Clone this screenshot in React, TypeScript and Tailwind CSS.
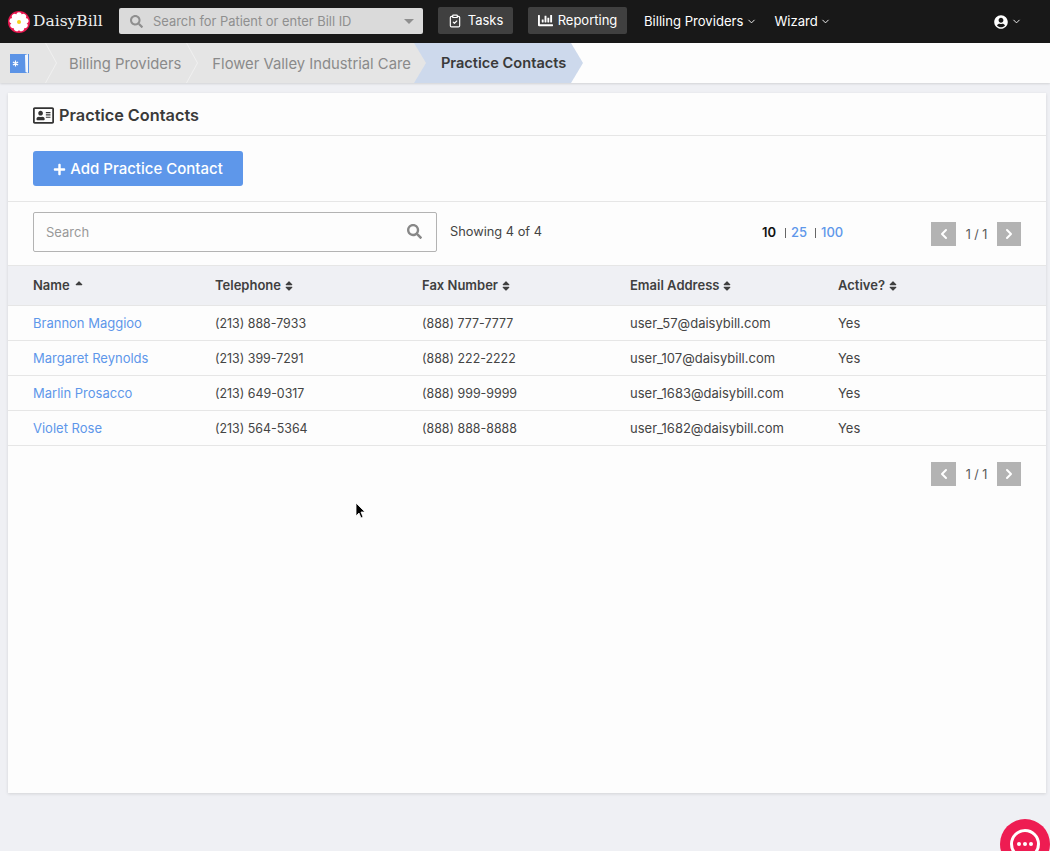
import React from 'react';
import { ChevronDown, ChevronLeft, ChevronRight, ClipboardCheck } from 'lucide-react';
import { FaChartBar, FaPlus, FaRegAddressCard, FaSearch, FaSort, FaSortUp, FaUserCircle } from 'react-icons/fa';

const contacts = [
  { name: 'Brannon Maggioo', phone: '(213) 888-7933', fax: '(888) 777-7777', email: 'user_57@daisybill.com' },
  { name: 'Margaret Reynolds', phone: '(213) 399-7291', fax: '(888) 222-2222', email: 'user_107@daisybill.com' },
  { name: 'Marlin Prosacco', phone: '(213) 649-0317', fax: '(888) 999-9999', email: 'user_1683@daisybill.com' },
  { name: 'Violet Rose', phone: '(213) 564-5364', fax: '(888) 888-8888', email: 'user_1682@daisybill.com' },
];

const columns = ['Telephone', 'Fax Number', 'Email Address', 'Active?'];

function DaisyLogo() {
  const petals = [0, 40, 80, 120, 160, 200, 240, 280, 320];
  return (
    <svg width="22" height="22" viewBox="0 0 22 22">
      <circle cx="11" cy="11" r="11" fill="#e8174f" />
      {petals.map((deg) => (
        <ellipse key={deg} cx="11" cy="5.8" rx="3.1" ry="4.5" fill="#fff" transform={`rotate(${deg} 11 11)`} />
      ))}
      <circle cx="11" cy="11" r="2" fill="#f7d117" />
    </svg>
  );
}

function Crumb({ label, className }: { label: string; className: string }) {
  return (
    <div className="flex items-center h-full">
      <svg width="12" height="40" viewBox="0 0 12 40" className="shrink-0">
        <path d="M0.5 0 L11.5 20 L0.5 40" fill="none" stroke="#f0f0f0" strokeWidth="1" />
      </svg>
      <span className={`pt-[2px] text-[14.8px] text-[#8a8a8a] ${className}`}>{label}</span>
    </div>
  );
}

function Pager() {
  return (
    <div className="flex items-center">
      <button className="w-[25px] h-6 bg-[#b3b3b3] flex items-center justify-center text-white">
        <ChevronLeft size={16} strokeWidth={3} />
      </button>
      <span className="w-[41px] pt-[3px] text-center text-[12.5px] text-[#555]">1 / 1</span>
      <button className="w-6 h-6 bg-[#b3b3b3] flex items-center justify-center text-white">
        <ChevronRight size={16} strokeWidth={3} />
      </button>
    </div>
  );
}

export default function App() {
  return (
    <div className="relative h-[851px] overflow-hidden bg-[#eff0f4] text-[#3a3a3a] font-['Inter',sans-serif]">
      {/* Top nav */}
      <nav className="h-[43px] bg-[#181818] flex items-center pl-2 text-white">
        <div className="flex items-center w-[111px] shrink-0">
          <DaisyLogo />
          <span className="ml-[3px] font-['DejaVu_Serif',serif] text-[15.5px] text-[#eee]">DaisyBill</span>
        </div>
        <div className="w-[304px] h-[26px] mb-px bg-[#dadada] rounded-[2px] flex items-center pl-[11px] pr-[9px] text-[#8f8f8f] shrink-0">
          <FaSearch size={13} />
          <span className="ml-[10px] pt-[2px] text-[12.9px] flex-1 whitespace-nowrap">Search for Patient or enter Bill ID</span>
          <svg width="10" height="5" viewBox="0 0 10 5"><path d="M0 0h10L5 5z" fill="#8f8f8f" /></svg>
        </div>
        <button className="ml-[15px] w-[75px] h-[27px] mb-[2px] rounded-[2px] bg-[#404040] flex items-center justify-center gap-[6px] text-[13px]">
          <ClipboardCheck size={14} />
          Tasks
        </button>
        <button className="ml-[15px] w-[99px] h-[27px] mb-[2px] rounded-[2px] bg-[#404040] flex items-center justify-center gap-[5px] text-[13px]">
          <FaChartBar size={15} />
          Reporting
        </button>
        <div className="ml-[17px] flex items-center gap-[3px] text-[13.1px]">
          Billing Providers <ChevronDown size={11} strokeWidth={2} />
        </div>
        <div className="ml-[17px] flex items-center gap-[2px] text-[13.1px]">
          Wizard <ChevronDown size={11} strokeWidth={2} />
        </div>
        <div className="ml-auto mr-[28px] flex items-center gap-[3px]">
          <FaUserCircle size={14} />
          <ChevronDown size={11} strokeWidth={2} />
        </div>
      </nav>

      {/* Breadcrumb */}
      <div className="h-10 bg-[#fdfdfd] flex items-center shadow-[0_1px_2px_rgba(0,0,0,0.12)]">
        <div className="h-full bg-[#e5e5e5] flex items-center">
          <div className="w-[45px] pl-[10px]">
            <svg width="19" height="19" viewBox="0 0 19 19">
              <rect width="19" height="19" fill="#5b93e6" />
              <path d="M15 1 L18 0 L18 19 L15.5 18 Z" fill="#f4f7fc" />
              <path d="M5.5 6.5v6M2.9 8l5.2 3M2.9 11l5.2-3" stroke="#fff" strokeWidth="1.2" fill="none" />
            </svg>
          </div>
          <Crumb label="Billing Providers" className="pl-3 pr-[5px]" />
          <Crumb label="Flower Valley Industrial Care" className="pl-[14px] pr-[3px]" />
        </div>
        <svg width="12" height="40" viewBox="0 0 12 40" className="shrink-0 bg-[#cdd9ec]">
          <path d="M0 0 L12 20 L0 40Z" fill="#e5e5e5" />
        </svg>
        <div className="h-full bg-[#cdd9ec] flex items-center pl-[15px] pr-[5px] pt-[2px] text-[14.6px] font-semibold text-[#3a3a3a]">
          Practice Contacts
        </div>
        <svg width="12" height="40" viewBox="0 0 12 40" className="shrink-0">
          <path d="M0 0 L12 20 L0 40Z" fill="#cdd9ec" />
        </svg>
      </div>

      {/* Card */}
      <main className="mt-[10px] mx-2 mr-1 h-[700px] bg-[#fdfdfd] shadow-[0_1px_3px_rgba(0,0,0,0.12)] text-[13px]">
        <div className="h-[43px] border-b border-[#e6e6e6] pl-[25px] pt-[2px] flex items-center gap-[5px]">
          <FaRegAddressCard size={21} className="text-[#333]" />
          <h1 className="text-[16.3px] font-semibold text-[#3a3a3a]">Practice Contacts</h1>
        </div>

        <div className="h-[66px] border-b border-[#e6e6e6] pl-[25px] flex items-center">
          <button className="w-[210px] h-[35px] pt-[2px] rounded-[3px] bg-[#5e97ea] text-white text-[15px] font-medium flex items-center justify-center gap-[4px]">
            <FaPlus size={13} />
            Add Practice Contact
          </button>
        </div>

        <div className="h-[63px] pl-[25px] pr-[25px] flex items-center">
          <div className="w-[404px] h-10 mb-1 border border-[#b3b3b3] rounded-[2px] flex items-center pl-3 pr-[14px] text-[#999]">
            <span className="flex-1 pt-[2px]">Search</span>
            <FaSearch size={15} className="text-[#888]" />
          </div>
          <span className="ml-[13px] mb-1 text-[12.8px] text-[#444]">Showing 4 of 4</span>
          <div className="ml-[220px] mb-[2px] flex items-center text-[#5e97ea] font-medium">
            <span className="font-semibold text-[#111]">10</span>
            <span className="ml-[9px] mr-[5px] w-px h-[10px] bg-[#666]" />
            <span>25</span>
            <span className="ml-2 mr-[5px] w-px h-[10px] bg-[#666]" />
            <span>100</span>
          </div>
          <div className="ml-auto"><Pager /></div>
        </div>

        <div className="h-[41px] bg-[#eff0f4] border-t border-b border-[#e6e6e6] pl-[25px] grid grid-cols-[182px_207px_208px_208px_1fr] items-center font-semibold text-[#3f3f3f]">
          <div className="flex items-center gap-[3px]">Name <FaSortUp size={12} /></div>
          {columns.map((col) => (
            <div key={col} className="flex items-center gap-[2px]">{col} <FaSort size={12} /></div>
          ))}
        </div>

        {contacts.map((c) => (
          <div key={c.email} className="h-[35px] pt-[2px] border-b border-[#e6e6e6] pl-[25px] grid grid-cols-[182px_207px_208px_208px_1fr] items-center text-[#444]">
            <a className="text-[#5e97ea]">{c.name}</a>
            <span className="text-[12.4px]">{c.phone}</span>
            <span className="text-[12.4px]">{c.fax}</span>
            <span>{c.email}</span>
            <span>Yes</span>
          </div>
        ))}

        <div className="mt-4 pr-[25px] flex justify-end"><Pager /></div>
      </main>

      {/* Chat bubble */}
      <div className="absolute left-[1000px] top-[819px] w-[50px] h-[50px] rounded-full bg-[#ee1c52] flex items-center justify-center">
        <div className="w-[30px] h-[30px] rounded-full border-[3px] border-white flex items-center justify-center gap-[2px]">
          <span className="w-[4px] h-[4px] rounded-full bg-white" />
          <span className="w-[4px] h-[4px] rounded-full bg-white" />
          <span className="w-[4px] h-[4px] rounded-full bg-white" />
        </div>
      </div>

      {/* Mouse cursor */}
      <svg className="absolute left-[355px] top-[502px]" width="12" height="19" viewBox="0 0 12 19">
        <path d="M1 1 L1 14 L4 11 L6 16 L8 15 L6 10 L10 10 Z" fill="#000" stroke="#fff" strokeWidth="0.8" />
      </svg>
    </div>
  );
}
